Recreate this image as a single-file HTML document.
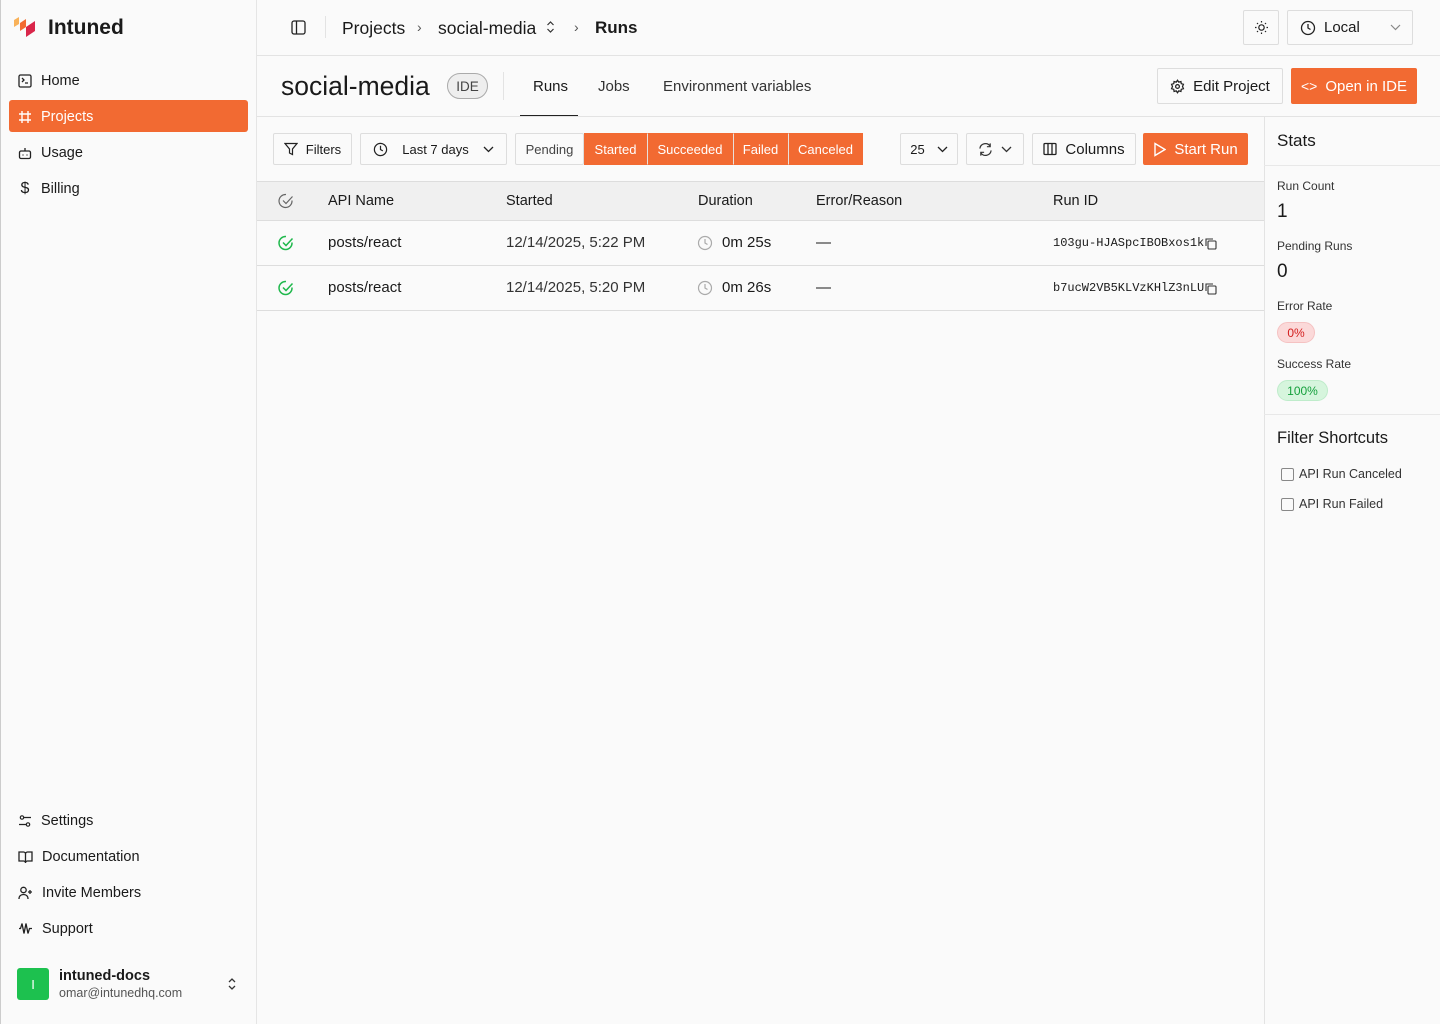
<!DOCTYPE html>
<html><head><meta charset="utf-8"><style>
*{box-sizing:border-box;margin:0;padding:0}
body{width:1440px;height:1024px;background:#fafafa;font-family:"Liberation Sans",sans-serif;color:#1a1a1a;position:relative;overflow:hidden}
.a{position:absolute}
svg{display:block}
.nav{position:absolute;left:9px;width:239px;height:32px;display:flex;align-items:center;font-size:14.5px;padding-left:9px;gap:9px;border-radius:3px;padding-top:1px}
.btn{position:absolute;border:1px solid #ddd;background:#fafafa;display:flex;align-items:center;justify-content:center;border-radius:2px;font-size:13px;gap:8px}
.org{background:#f26a32;color:#fff;border-color:#f26a32}
.th{position:absolute;top:193px;font-size:14.5px}
.td{position:absolute;font-size:15px}
.mono{font-family:"Liberation Mono",monospace;font-size:12px}
.lbl{position:absolute;left:1277px;font-size:12px;color:#333}
.big{position:absolute;left:1277px;font-size:19px}
</style></head><body>
<!-- sidebar -->
<div class="a" style="left:0;top:0;width:257px;height:1024px;border-right:1px solid #e5e5e5;border-left:1px solid #ccc"></div>
<svg class="a" style="left:13px;top:16px" width="24" height="24" viewBox="0 0 24 24"><path d="M1 4l5-3v7l-5 3z" fill="#f9b25a"/><path d="M7 7l6-4v8l-6 4z" fill="#f26a32"/><path d="M13 11l9-6v10l-9 6z" fill="#d9264a"/></svg>
<div class="a" style="left:48px;top:16px;font-size:21px;font-weight:bold">Intuned</div>
<div class="nav" style="top:64px"><svg width="14" height="14" viewBox="0 0 14 14" fill="none" stroke="#222" stroke-width="1.3"><rect x="1" y="1" width="12" height="12" rx="1.5"/><path d="M4 4l2 2-2 2M7 9h3"/></svg>Home</div>
<div class="nav" style="top:100px;background:#f26a32;color:#fff"><svg width="14" height="14" viewBox="0 0 14 14" fill="none" stroke="#fff" stroke-width="1.4"><path d="M4 1v12M10 1v12M1 4h12M1 10h12"/></svg>Projects</div>
<div class="nav" style="top:136px"><svg width="14" height="14" viewBox="0 0 14 14" fill="none" stroke="#222" stroke-width="1.3"><rect x="1.5" y="5" width="11" height="7.5" rx="1.5"/><path d="M7 5V2M5 8.5v1M9 8.5v1"/></svg>Usage</div>
<div class="nav" style="top:172px"><span style="width:14px;text-align:center;font-size:16px">$</span>Billing</div>
<div class="nav" style="top:804px"><svg width="14" height="14" viewBox="0 0 14 14" fill="none" stroke="#222" stroke-width="1.2"><circle cx="4" cy="3.5" r="1.7"/><circle cx="10" cy="10.5" r="1.7"/><path d="M6 3.5h7M1 10.5h7"/></svg>Settings</div>
<div class="nav" style="top:840px"><svg width="15" height="14" viewBox="0 0 15 14" fill="none" stroke="#222" stroke-width="1.3"><path d="M1 2h4.5a2 2 0 012 2v9a2 2 0 00-2-2H1zM14 2H9.5a2 2 0 00-2 2v9a2 2 0 012-2H14z"/></svg>Documentation</div>
<div class="nav" style="top:876px"><svg width="15" height="14" viewBox="0 0 15 14" fill="none" stroke="#222" stroke-width="1.3"><circle cx="5.5" cy="4" r="2.7"/><path d="M1 13c0-3 2-4.5 4.5-4.5S10 10 10 13M12 4v4M10 6h4"/></svg>Invite Members</div>
<div class="nav" style="top:912px"><svg width="15" height="15" viewBox="0 0 15 15" fill="none" stroke="#222" stroke-width="1.3"><path d="M1 7.5h1.5l1.5-5 2 10 2-10 2 10 1.5-5H14"/></svg>Support</div>
<div class="a" style="left:17px;top:968px;width:32px;height:32px;background:#1dc14f;border-radius:3px;color:#fff;font-size:13px;display:flex;align-items:center;justify-content:center">I</div>
<div class="a" style="left:59px;top:968px;font-size:14.5px;font-weight:bold">intuned-docs</div>
<div class="a" style="left:59px;top:986px;font-size:12.5px;color:#555">omar@intunedhq.com</div>
<svg class="a" style="left:226px;top:977px" width="12" height="14" viewBox="0 0 12 14" fill="none" stroke="#333" stroke-width="1.3"><path d="M3 5l3-3 3 3M3 9l3 3 3-3"/></svg>
<!-- topbar -->
<div class="a" style="left:257px;top:55px;width:1183px;border-top:1px solid #e3e3e3"></div>
<svg class="a" style="left:291px;top:20px" width="15" height="15" viewBox="0 0 15 15" fill="none" stroke="#222" stroke-width="1.3"><rect x="1" y="1" width="13" height="13" rx="2"/><path d="M5.5 1v13"/></svg>
<div class="a" style="left:325px;top:16px;height:22px;border-left:1px solid #e3e3e3"></div>
<div class="a" style="left:342px;top:18px;font-size:17.5px">Projects</div>
<div class="a" style="left:417px;top:19px;font-size:14px;color:#555">›</div>
<div class="a" style="left:438px;top:18px;font-size:17.5px">social-media</div>
<svg class="a" style="left:545px;top:20px" width="11" height="14" viewBox="0 0 11 14" fill="none" stroke="#333" stroke-width="1.2"><path d="M2.5 5l3-3 3 3M2.5 9l3 3 3-3"/></svg>
<div class="a" style="left:574px;top:19px;font-size:14px;color:#555">›</div>
<div class="a" style="left:595px;top:18px;font-size:17px;font-weight:bold">Runs</div>
<div class="btn" style="left:1243px;top:10px;width:36px;height:35px"><svg width="15" height="15" viewBox="0 0 15 15" fill="none" stroke="#222" stroke-width="1.2"><circle cx="7.5" cy="7.5" r="2.7"/><path d="M7.5 1v1.5M7.5 12.5V14M1 7.5h1.5M12.5 7.5H14M3 3l1 1M11 11l1 1M3 12l1-1M11 4l1-1"/></svg></div>
<div class="btn" style="left:1287px;top:10px;width:126px;height:35px;justify-content:flex-start;padding-left:12px;font-size:15px;gap:8px"><svg width="16" height="16" viewBox="0 0 16 16" fill="none" stroke="#222" stroke-width="1.3"><circle cx="8" cy="8" r="6.5"/><path d="M8 4v4l2.5 1.5"/></svg>Local<svg style="margin-left:22px" width="11" height="7" viewBox="0 0 11 7" fill="none" stroke="#888" stroke-width="1.2"><path d="M1 1l4.5 4.5L10 1"/></svg></div>
<!-- page header -->
<div class="a" style="left:281px;top:71px;font-size:26.5px">social-media</div>
<div class="a" style="left:447px;top:73px;width:41px;height:26px;border:1px solid #aaa;border-radius:13px;background:#eee;font-size:13.5px;color:#444;display:flex;align-items:center;justify-content:center">IDE</div>
<div class="a" style="left:503px;top:72px;height:28px;border-left:1px solid #e3e3e3"></div>
<div class="a" style="left:533px;top:78px;font-size:15px">Runs</div>
<div class="a" style="left:520px;top:115px;width:58px;height:2px;background:#222"></div>
<div class="a" style="left:598px;top:78px;font-size:15px;color:#333">Jobs</div>
<div class="a" style="left:663px;top:78px;font-size:15px;color:#333">Environment variables</div>
<div class="btn" style="left:1157px;top:68px;width:126px;height:36px;font-size:15px"><svg width="15" height="15" viewBox="0 0 24 24" fill="none" stroke="#222" stroke-width="2"><circle cx="12" cy="12" r="3"/><path d="M12 2l2 3 3.5-1 .5 3.5 3.5 1-1.5 3.5 1.5 3.5-3.5 1-.5 3.5-3.5-1-2 3-2-3-3.5 1-.5-3.5-3.5-1L4 12 2.5 8.5l3.5-1L6.5 4 10 5z"/></svg>Edit Project</div>
<div class="btn org" style="left:1291px;top:68px;width:126px;height:36px;font-size:15px"><span style="font-size:14px">&lt;&gt;</span>Open in IDE</div>
<div class="a" style="left:257px;top:116px;width:1183px;border-top:1px solid #e3e3e3"></div>
<!-- toolbar -->
<div class="btn" style="left:273px;top:133px;width:79px;height:32px"><svg width="14" height="14" viewBox="0 0 14 14" fill="none" stroke="#222" stroke-width="1.2"><path d="M1 1.5h12L8.5 7v5.5l-3-1.5V7z"/></svg>Filters</div>
<div class="btn" style="left:360px;top:133px;width:147px;height:32px;gap:14px"><svg width="15" height="15" viewBox="0 0 16 16" fill="none" stroke="#222" stroke-width="1.3"><circle cx="8" cy="8" r="6.5"/><path d="M8 4v4l2.5 1.5"/></svg>Last 7 days<svg width="11" height="7" viewBox="0 0 11 7" fill="none" stroke="#222" stroke-width="1.3"><path d="M1 1l4.5 4.5L10 1"/></svg></div>
<div class="btn" style="left:515px;top:133px;width:69px;height:32px;color:#444">Pending</div>
<div class="btn org" style="left:584px;top:133px;width:63px;height:32px;border-radius:0">Started</div>
<div class="btn org" style="left:647px;top:133px;width:86px;height:32px;border-radius:0;border-left-color:#e8e0dc">Succeeded</div>
<div class="btn org" style="left:733px;top:133px;width:55px;height:32px;border-radius:0;border-left-color:#e8e0dc">Failed</div>
<div class="btn org" style="left:788px;top:133px;width:75px;height:32px;border-radius:0;border-left-color:#e8e0dc">Canceled</div>
<div class="btn" style="left:900px;top:133px;width:58px;height:32px;gap:12px">25<svg width="11" height="7" viewBox="0 0 11 7" fill="none" stroke="#222" stroke-width="1.3"><path d="M1 1l4.5 4.5L10 1"/></svg></div>
<div class="btn" style="left:966px;top:133px;width:58px;height:32px"><svg width="15" height="15" viewBox="0 0 16 16" fill="none" stroke="#333" stroke-width="1.3"><path d="M2 7a6 6 0 0111-2.5M14 9a6 6 0 01-11 2.5M13 1.5v3.5H9.5M3 14.5V11h3.5"/></svg><svg width="11" height="7" viewBox="0 0 11 7" fill="none" stroke="#333" stroke-width="1.3"><path d="M1 1l4.5 4.5L10 1"/></svg></div>
<div class="btn" style="left:1032px;top:133px;width:104px;height:32px;font-size:15px"><svg width="14" height="14" viewBox="0 0 14 14" fill="none" stroke="#222" stroke-width="1.3"><rect x="1" y="1.5" width="12" height="11" rx="1"/><path d="M5 1.5v11M9 1.5v11"/></svg>Columns</div>
<div class="btn org" style="left:1143px;top:133px;width:105px;height:32px;font-size:15px"><svg width="13" height="15" viewBox="0 0 13 15" fill="none" stroke="#fff" stroke-width="1.4"><path d="M2 1.5l10 6-10 6z"/></svg>Start Run</div>
<!-- table -->
<div class="a" style="left:257px;top:181px;width:1007px;height:40px;background:#f0f0f0;border-top:1px solid #ddd;border-bottom:1px solid #ddd"></div>
<svg class="a" style="left:278px;top:193px" width="16" height="16" viewBox="0 0 16 16" fill="none" stroke="#666" stroke-width="1.2"><path d="M14 7.5A6.5 6.5 0 118 1.5"/><path d="M5 7.5l3 3 6.5-7"/></svg>
<div class="th" style="left:328px">API Name</div>
<div class="th" style="left:506px">Started</div>
<div class="th" style="left:698px">Duration</div>
<div class="th" style="left:816px">Error/Reason</div>
<div class="th" style="left:1053px">Run ID</div>
<div class="a" style="left:257px;top:265px;width:1007px;border-top:1px solid #ddd"></div>
<div class="a" style="left:257px;top:310px;width:1007px;border-top:1px solid #ddd"></div>
<svg class="a" style="left:278px;top:235px" width="16" height="16" viewBox="0 0 16 16" fill="none" stroke="#1fb84c" stroke-width="1.5"><path d="M14 7.5A6.5 6.5 0 118 1.5"/><path d="M5 7.5l3 3 6.5-7"/></svg>
<svg class="a" style="left:278px;top:280px" width="16" height="16" viewBox="0 0 16 16" fill="none" stroke="#1fb84c" stroke-width="1.5"><path d="M14 7.5A6.5 6.5 0 118 1.5"/><path d="M5 7.5l3 3 6.5-7"/></svg>
<div class="td" style="left:328px;top:234px">posts/react</div>
<div class="td" style="left:328px;top:279px">posts/react</div>
<div class="td" style="left:506px;top:234px;color:#333">12/14/2025, 5:22 PM</div>
<div class="td" style="left:506px;top:279px;color:#333">12/14/2025, 5:20 PM</div>
<svg class="a" style="left:697px;top:235px" width="16" height="16" viewBox="0 0 16 16" fill="none" stroke="#aaa" stroke-width="1.2"><circle cx="8" cy="8" r="6.5"/><path d="M8 4v4l2.5 1.5"/></svg>
<svg class="a" style="left:697px;top:280px" width="16" height="16" viewBox="0 0 16 16" fill="none" stroke="#aaa" stroke-width="1.2"><circle cx="8" cy="8" r="6.5"/><path d="M8 4v4l2.5 1.5"/></svg>
<div class="td" style="left:722px;top:234px">0m 25s</div>
<div class="td" style="left:722px;top:279px">0m 26s</div>
<div class="td" style="left:816px;top:234px">—</div>
<div class="td" style="left:816px;top:279px">—</div>
<div class="td mono" style="left:1053px;top:236px">103gu-HJASpcIBOBxos1k</div>
<div class="td mono" style="left:1053px;top:281px">b7ucW2VB5KLVzKHlZ3nLU</div>
<svg class="a" style="left:1204px;top:237px" width="13" height="13" viewBox="0 0 13 13" fill="none" stroke="#333" stroke-width="1.1"><rect x="4" y="4" width="8" height="8" rx="1"/><path d="M2 9V2h7"/></svg>
<svg class="a" style="left:1204px;top:282px" width="13" height="13" viewBox="0 0 13 13" fill="none" stroke="#333" stroke-width="1.1"><rect x="4" y="4" width="8" height="8" rx="1"/><path d="M2 9V2h7"/></svg>
<!-- right panel -->
<div class="a" style="left:1264px;top:117px;width:176px;height:907px;border-left:1px solid #e3e3e3"></div>
<div class="a" style="left:1277px;top:131px;font-size:17px">Stats</div>
<div class="a" style="left:1264px;top:165px;width:176px;border-top:1px solid #e8e8e8"></div>
<div class="lbl" style="top:179px">Run Count</div>
<div class="big" style="top:201px">1</div>
<div class="lbl" style="top:239px">Pending Runs</div>
<div class="big" style="top:261px">0</div>
<div class="lbl" style="top:299px">Error Rate</div>
<div class="a" style="left:1277px;top:322px;width:38px;height:21px;border-radius:11px;background:#fbd9d9;border:1px solid #f5c2c2;color:#d42020;font-size:12px;display:flex;align-items:center;justify-content:center">0%</div>
<div class="lbl" style="top:357px">Success Rate</div>
<div class="a" style="left:1277px;top:380px;width:51px;height:21px;border-radius:11px;background:#d6f5dd;border:1px solid #bfeccb;color:#15a03c;font-size:12px;display:flex;align-items:center;justify-content:center">100%</div>
<div class="a" style="left:1264px;top:414px;width:176px;border-top:1px solid #e8e8e8"></div>
<div class="a" style="left:1277px;top:429px;font-size:16.5px">Filter Shortcuts</div>
<div class="a" style="left:1281px;top:468px;width:13px;height:13px;border:1px solid #888;border-radius:2px"></div>
<div class="lbl" style="left:1299px;top:467px;font-size:12.5px">API Run Canceled</div>
<div class="a" style="left:1281px;top:498px;width:13px;height:13px;border:1px solid #888;border-radius:2px"></div>
<div class="lbl" style="left:1299px;top:497px;font-size:12.5px">API Run Failed</div>
</body></html>
